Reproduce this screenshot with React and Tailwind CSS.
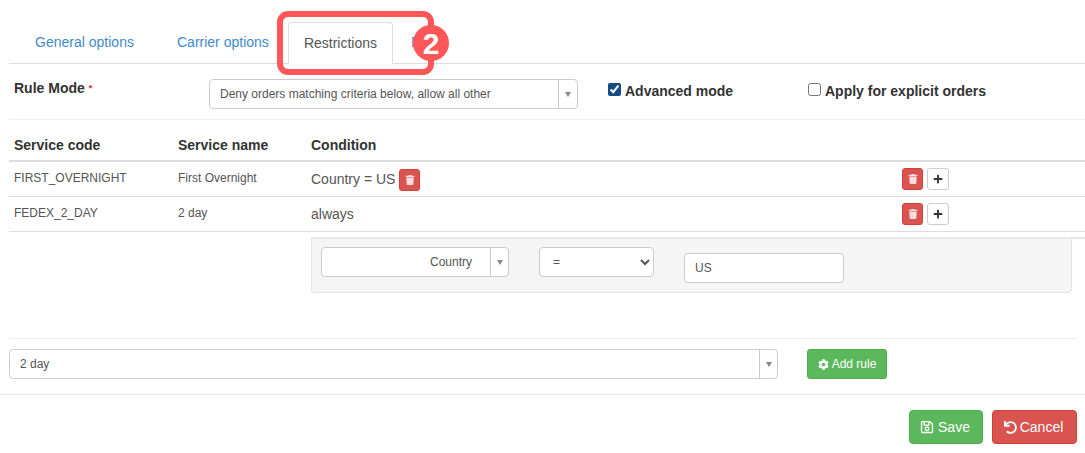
import { FaTrash, FaPlus, FaCog, FaRegSave, FaUndo } from "react-icons/fa";

const rules = [
  { code: "FIRST_OVERNIGHT", name: "First Overnight", condition: "Country = US", removable: true },
  { code: "FEDEX_2_DAY", name: "2 day", condition: "always", removable: false },
];

const TrashButton = () => (
  <button className="w-[21px] h-[22px] flex items-center justify-center bg-[#d9534f] border border-[#d43f3a] rounded-[3px] text-white/80">
    <FaTrash size={10} />
  </button>
);

const Combo = ({ children, className, arrowClass, textClass }) => (
  <div className={`flex bg-white border border-[#ccc] rounded-[4px] text-[12px] text-[#555] ${className}`}>
    <div className={`flex-1 flex items-center ${textClass}`}>{children}</div>
    <div className={`flex items-center justify-center border-l border-[#ccc] ${arrowClass}`}>
      <div className="w-0 h-0 border-x-[3.5px] border-x-transparent border-t-[5px] border-t-[#888]" />
    </div>
  </div>
);

export default function App() {
  return (
    <div className="relative w-[1085px] h-[453px] overflow-hidden bg-white text-[#333] font-['Liberation_Sans',sans-serif]">
      {/* tabs */}
      <div className="ml-[9px] pl-[11px] pt-[22px] h-[64px] flex items-start gap-[13px] border-b border-[#ddd] text-[14px] text-[#428bca]">
        <a className="h-[41px] w-[129px] flex items-center justify-center">General options</a>
        <a className="h-[41px] pl-[15px] w-[113px] flex items-center">Carrier options</a>
        <a className="h-[42px] w-[105px] flex items-center justify-center bg-white border border-[#ddd] border-b-white rounded-t-[4px] text-[#555]">Restrictions</a>
        <a className="h-[41px] pl-[5px] flex items-center">D</a>
      </div>

      {/* rule mode */}
      <div className="ml-[9px] h-[56px] flex border-b border-[#eee]">
        <div className="w-[200px] pl-[5px] pt-[16px] text-[14px] font-bold leading-[16px]">
          Rule Mode <span className="text-[#e02020] text-[9px] align-top">*</span>
        </div>
        <Combo className="mt-[15px] w-[369px] h-[30px]" arrowClass="w-[19px]" textClass="pl-[10px]">
          Deny orders matching criteria below, allow all other
        </Combo>
        <label className="ml-[30px] w-[200px] pt-[19px] flex items-start gap-[4px] text-[14px] font-bold leading-[16px]">
          <input type="checkbox" defaultChecked className="m-0 w-[13px] h-[13px] accent-[#164a85]" />
          Advanced mode
        </label>
        <label className="pt-[19px] flex items-start gap-[4px] text-[14px] font-bold leading-[16px]">
          <input type="checkbox" className="m-0 w-[13px] h-[13px]" />
          Apply for explicit orders
        </label>
      </div>

      {/* rule table */}
      <div className="ml-[9px]">
        <div className="h-[42px] grid grid-cols-[164px_133px_1fr] pl-[5px] pt-[17px] border-b-2 border-[#ddd] text-[14px] font-bold leading-[16px]">
          <div>Service code</div>
          <div>Service name</div>
          <div>Condition</div>
        </div>
        {rules.map((rule) => (
          <div key={rule.code} className="h-[35px] grid grid-cols-[164px_133px_591px_1fr] items-center pl-[5px] border-b border-[#ddd] text-[12px] text-[#555]">
            <div className="-mt-[3px]">{rule.code}</div>
            <div className="-mt-[3px]">{rule.name}</div>
            <div className="flex items-center gap-[4px] text-[14px] pt-[1px]">
              {rule.condition}
              {rule.removable && <TrashButton />}
            </div>
            <div className="flex items-center gap-[4px]">
              <TrashButton />
              <button className="w-[22px] h-[22px] flex items-center justify-center bg-white border border-[#ccc] rounded-[3px] text-[#333]">
                <FaPlus size={10} />
              </button>
            </div>
          </div>
        ))}
      </div>

      {/* condition editor */}
      <div className="ml-[311px] mt-[5px] border-t-2 border-[#e8e8e8]">
        <div className="w-[761px] h-[54px] flex items-start gap-[30px] pl-[9px] pt-[8px] bg-[#f5f5f5] border-x border-b border-[#e3e3e3] rounded-b-[4px] text-[12px] text-[#555]">
          <Combo className="w-[188px] h-[30px]" arrowClass="w-[18px]" textClass="justify-end pr-[18px]">
            Country
          </Combo>
          <select className="w-[115px] h-[30px] pl-[9px] bg-white border border-[#ccc] rounded-[4px]">
            <option>=</option>
          </select>
          <input defaultValue="US" className="mt-[6px] w-[160px] h-[30px] px-[10px] bg-white border border-[#ccc] rounded-[4px]" />
        </div>
      </div>

      {/* add rule */}
      <div className="ml-[9px] mt-[45px] w-[1068px] pt-[10px] h-[56px] flex items-start gap-[29px] border-t border-[#eee]">
        <Combo className="w-[769px] h-[30px]" arrowClass="w-[18px]" textClass="pl-[10px]">
          2 day
        </Combo>
        <button className="w-[80px] h-[30px] flex items-center justify-center gap-[3px] bg-[#5cb85c] border border-[#4cae4c] rounded-[3px] text-white text-[12px]">
          <FaCog size={11} />
          Add rule
        </button>
      </div>

      {/* footer */}
      <div className="h-[59px] pt-[15px] pr-[8px] flex justify-end items-start gap-[9px] border-t border-[#e5e5e5] text-[14px] text-white">
        <button className="w-[74px] h-[34px] pr-[2px] flex items-center justify-center gap-[4px] bg-[#5cb85c] border border-[#4cae4c] rounded-[4px]">
          <FaRegSave size={14} />
          Save
        </button>
        <button className="w-[85px] h-[34px] pr-[2px] flex items-center justify-center gap-[3px] bg-[#d9534f] border border-[#d43f3a] rounded-[4px]">
          <FaUndo size={13} />
          Cancel
        </button>
      </div>

      {/* annotation over the tab */}
      <div className="absolute left-[277px] top-[11px] w-[157px] h-[64px] border-[6px] border-[#ff5757] rounded-[11px]" />
      <div className="absolute left-[413px] top-[25px] w-[36px] h-[36px] rounded-full bg-[#ff5757] text-white flex items-center justify-center text-[30px] font-bold">
        2
      </div>
    </div>
  );
}
